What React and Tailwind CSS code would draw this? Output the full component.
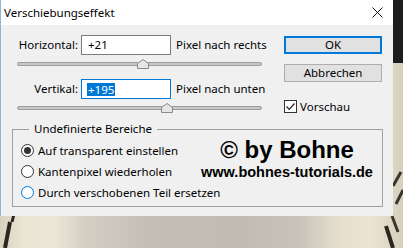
import React from "react";

const ui = { fontFamily: '"Noto Sans", "Open Sans", sans-serif' };
const arial = { fontFamily: '"Liberation Sans", Arial, sans-serif' };

function Thumb() {
  return (
    <svg width="12" height="10" viewBox="0 0 12 10" className="block">
      <path d="M0.5 9.5 V4.5 L6 0.5 L11.5 4.5 V9.5 Z" fill="#e6e6e6" stroke="#8a8a8a" strokeWidth="1" />
    </svg>
  );
}

function Slider({ thumbX }) {
  return (
    <div className="relative h-[10px] w-[245px]">
      <div className="absolute left-0 right-0 top-[3px] h-[4px] rounded-[2px] border border-[#9c9c9c] bg-[#c8c8c8]" />
      <div className="absolute top-0" style={{ left: thumbX }}>
        <Thumb />
      </div>
    </div>
  );
}

function Radio({ checked, hover }) {
  return (
    <div
      className={`flex h-[13px] w-[13px] shrink-0 items-center justify-center rounded-full border bg-white ${hover ? "border-[#0078d7]" : "border-[#333333]"}`}
    >
      {checked && <div className="h-[7px] w-[7px] rounded-full bg-[#333333]" />}
    </div>
  );
}

export default function App() {
  return (
    <div
      className="relative h-[248px] w-[403px] overflow-hidden"
      style={{
        ...ui,
        background:
          "linear-gradient(90deg, #d9d2bf 0px, #ebe5d4 25px, #ece6d6 55px, #d3cfc4 85px, #c3bfb5 150px, #c0bcb2 240px, #c8c4b9 300px, #e3ddcb 335px, #ebe4d1 370px, #d6cfbb 403px)",
      }}
    >
      <svg className="absolute left-0 top-0" width="403" height="248" viewBox="0 0 403 248">
        <path d="M10 222 L5 248" stroke="#2a2620" strokeWidth="4" />
        <path d="M14 214 L12 222" stroke="#2a2620" strokeWidth="3" />
        <path d="M386 226 L393 248" stroke="#2a2620" strokeWidth="4" />
        <path d="M393 186 L401 172" stroke="#3a352c" strokeWidth="3" />
        <path d="M396 204 L403 190" stroke="#3a352c" strokeWidth="3" />
        <path d="M392 216 L398 232" stroke="#3a352c" strokeWidth="3" />
      </svg>
      <div className="relative flex">
        <div className="flex h-[216px] w-[393px] shrink-0 flex-col border-l border-[#8fb3d9] bg-[#f0f0f0]">
          <div className="flex h-[25px] shrink-0 items-center bg-white pl-[3px] pr-[10px] text-[11.5px] text-black">
            <span>Verschiebungseffekt</span>
            <svg className="ml-auto" width="11" height="11" viewBox="0 0 11 11">
              <path d="M0.5 0.5 L10.5 10.5 M10.5 0.5 L0.5 10.5" stroke="#111" strokeWidth="1" />
            </svg>
          </div>
          <div className="flex text-[11.5px] text-black">
            <div className="ml-[16px] w-[245px] shrink-0">
              <div className="mt-[10px] flex h-[20px] items-center">
                <div className="w-[61px] shrink-0 text-right">Horizontal:</div>
                <div className="ml-[3px] flex h-full w-[90px] shrink-0 items-center border border-[#7a7a7a] bg-white pl-[6px]">+21</div>
                <div className="ml-[5px] shrink-0 whitespace-nowrap">Pixel nach rechts</div>
              </div>
              <div className="mt-[4px]">
                <Slider thumbX={120} />
              </div>
              <div className="mt-[10px] flex h-[20px] items-center">
                <div className="w-[61px] shrink-0 text-right">Vertikal:</div>
                <div className="ml-[3px] flex h-full w-[90px] shrink-0 items-center border border-[#0078d7] bg-white pl-[5px]">
                  <span className="bg-[#0078d7] px-[1px] leading-[13px] text-white">+195</span>
                </div>
                <div className="ml-[5px] shrink-0 whitespace-nowrap">Pixel nach unten</div>
              </div>
              <div className="mt-[4px]">
                <Slider thumbX={144} />
              </div>
            </div>
            <div className="ml-[22px] flex w-[98px] shrink-0 flex-col">
              <div className="mt-[11px] flex h-[18px] items-center justify-center border-2 border-[#0078d7] bg-[#e1e1e1]">OK</div>
              <div className="mt-[10px] flex h-[18px] items-center justify-center border border-[#adadad] bg-[#e1e1e1]">Abbrechen</div>
              <div className="mt-[16px] flex items-center">
                <div className="flex h-[13px] w-[13px] items-center justify-center border border-[#333333] bg-white">
                  <svg width="11" height="11" viewBox="0 0 11 11">
                    <path d="M1.5 5.5 L4.2 8.3 L9.5 2.5" stroke="#222" strokeWidth="1.2" fill="none" />
                  </svg>
                </div>
                <span className="ml-[3px]">Vorschau</span>
              </div>
            </div>
          </div>
          <div className="relative ml-[11px] mt-[14px] h-[78px] w-[371px] shrink-0 border border-[#a0a0a0] text-[11.5px] text-black">
            <div className="absolute left-[16px] top-[-9px] bg-[#f0f0f0] px-[5px] leading-[16px]">Undefinierte Bereiche</div>
            <div className="flex">
              <div className="ml-[8px] mt-[12px] flex flex-col">
                <div className="flex h-[16px] items-center gap-[4px]">
                  <Radio checked />
                  <span>Auf transparent einstellen</span>
                </div>
                <div className="mt-[5px] flex h-[16px] items-center gap-[4px]">
                  <Radio />
                  <span>Kantenpixel wiederholen</span>
                </div>
                <div className="mt-[5px] flex h-[16px] items-center gap-[4px]">
                  <Radio hover />
                  <span>Durch verschobenen Teil ersetzen</span>
                </div>
              </div>
            </div>
            <div className="absolute left-[186px] top-[7px] flex w-[176px] flex-col items-center" style={arial}>
              <div className="whitespace-nowrap text-[24px] font-bold leading-[26px]">© by Bohne</div>
              <div className="whitespace-nowrap text-[14.5px] font-bold leading-[18px]">www.bohnes-tutorials.de</div>
            </div>
          </div>
        </div>
        <div className="h-[63px] w-[10px] shrink-0 bg-[#1c1c1c]" />
      </div>
    </div>
  );
}
